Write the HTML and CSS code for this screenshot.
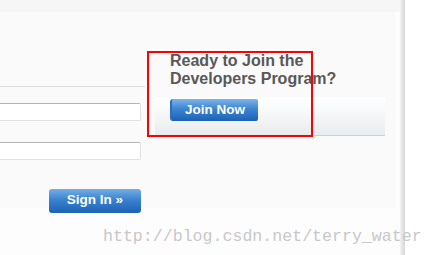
FILE: index.html
```html
<!DOCTYPE html>
<html lang="en">
<head>
    <meta charset="UTF-8">
    <meta name="viewport" content="width=device-width, initial-scale=1.0">
    <title>Sign In - Developers Program</title>
    <link rel="stylesheet" href="styles.css">
</head>
<body>
    <div class="page">
        <div class="page-top"></div>
        <div class="content">
            <div class="login">
                <hr class="divider">
                <form class="login-form" onsubmit="return false">
                    <input type="text" class="field" name="username">
                    <input type="password" class="field" name="password">
                    <button type="submit" class="signin-button">Sign In &raquo;</button>
                </form>
            </div>

            <div class="promo">
                <h2 class="promo-title">Ready to Join the<br>Developers Program?</h2>
                <div class="promo-box">
                    <a class="join-button">Join Now</a>
                </div>
            </div>
        </div>
    </div>
    <div class="page-edge"></div>
    <div class="outside"></div>

    <!-- annotation overlays -->
    <div class="highlight"></div>
    <div class="watermark">http://blog.csdn.net/terry_water</div>
</body>
</html>
```

FILE: styles.css
```css
* {
    margin: 0;
    padding: 0;
    box-sizing: border-box;
}

body {
    font-family: "Liberation Sans", Arial, sans-serif;
    display: flex;
    height: 255px;
    overflow: hidden;
    background: #fff;
}

.page {
    width: 400px;
    background: #fdfdfd;
}

.page-top {
    height: 12px;
    background: #f6f6f6;
}

.content {
    display: flex;
    width: 395px;
    height: 196px;
    background: #fafafa;
}

.login {
    width: 165px;
    margin-left: -20px;
    padding-top: 74px;
    display: flex;
    flex-direction: column;
}

.divider {
    border: none;
    border-top: 1px solid #dcdcdc;
}

.login-form {
    display: flex;
    flex-direction: column;
    align-items: flex-end;
    padding-top: 16px;
    padding-right: 4px;
}

.field {
    display: block;
    width: 100%;
    height: 18px;
    background: #fff;
    border: 1px solid #dfe1e4;
    border-top-color: #b4b4b4;
    border-radius: 2px;
    margin-bottom: 21px;
}

.signin-button {
    margin-top: 8px;
    width: 92px;
    height: 24px;
    padding-bottom: 3px;
    border: none;
    border-radius: 3px;
    background: linear-gradient(#74aee6, #3a82d0 45%, #1c62b6);
    color: #fff;
    font-family: "Liberation Sans", Arial, sans-serif;
    font-size: 13.5px;
    font-weight: bold;
    text-align: center;
}

.promo {
    margin-left: 10px;
    width: 230px;
    padding-top: 40px;
}

.promo-title {
    padding: 0 15px;
    font-size: 16px;
    line-height: 18px;
    font-weight: bold;
    color: #585858;
}

.promo-box {
    margin-top: 9px;
    padding: 2px 15px 14px;
    background: linear-gradient(#ffffff, #e9ecef);
    border-bottom: 1px solid #cfd1d4;
}

.join-button {
    display: block;
    width: 88px;
    height: 22px;
    line-height: 21px;
    border-radius: 3px 2px 2px 3px;
    border-left: 2px solid #2c6fbf;
    background: linear-gradient(#7cb4ea, #3d85d2 45%, #1b62b7);
    color: #fff;
    font-size: 13.5px;
    font-weight: bold;
    text-align: center;
    cursor: pointer;
}

.page-edge {
    width: 5px;
    background: linear-gradient(to right, #f2f2f2, #d6d6d6);
}

.outside {
    flex: 1;
    background: #fff;
}

.highlight {
    position: absolute;
    left: 147px;
    top: 51px;
    width: 166px;
    height: 86px;
    border: 2px solid #f00;
}

.watermark {
    position: absolute;
    left: 103px;
    top: 227px;
    font-family: "Liberation Mono", "Courier New", monospace;
    font-size: 16.6px;
    color: #c8c8c8;
    white-space: nowrap;
}
```
